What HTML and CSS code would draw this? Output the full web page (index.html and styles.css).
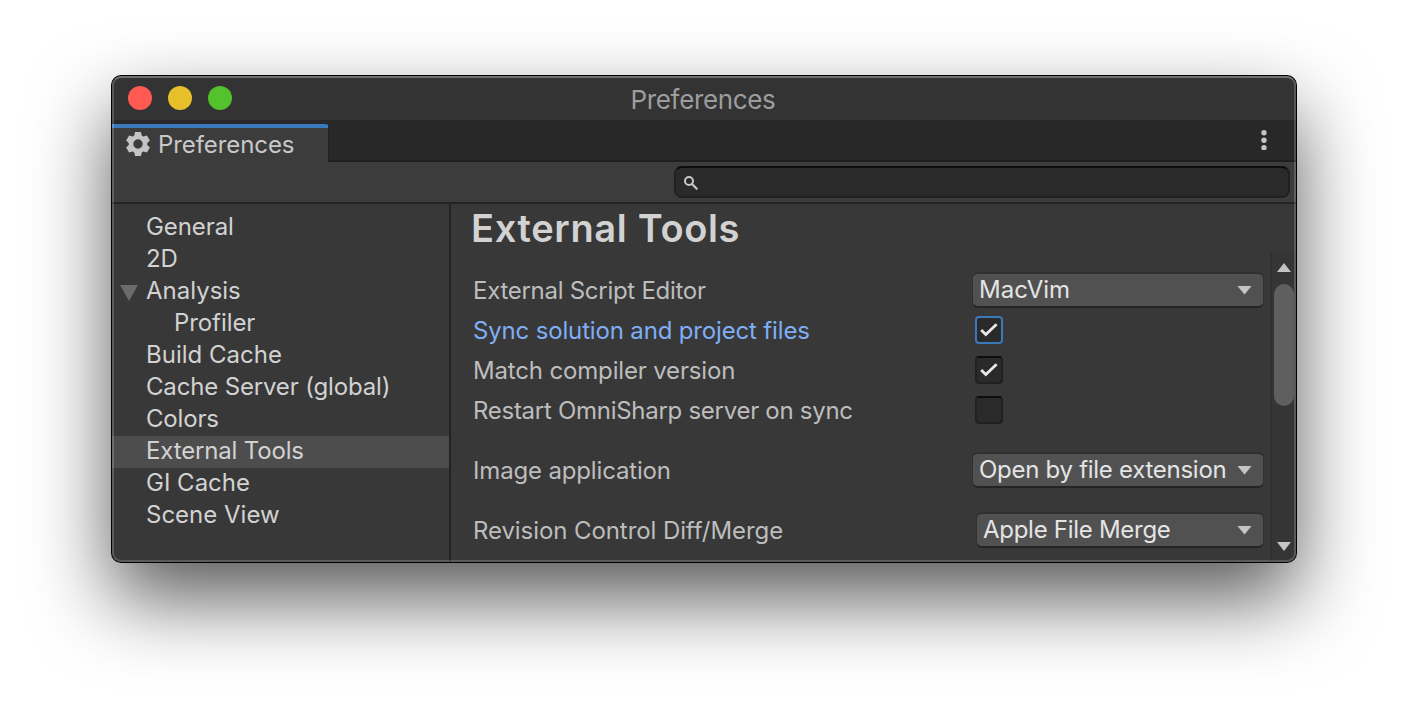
FILE: index.html
```html
<!DOCTYPE html>
<html lang="en">
<head>
<meta charset="utf-8">
<title>Preferences</title>
<link rel="stylesheet" href="styles.css">
</head>
<body>
<main class="window">
  <header class="titlebar">
    <div class="lights"><span class="light close"></span><span class="light minimize"></span><span class="light maximize"></span></div>
    <div class="title">Preferences</div>
  </header>
  <div class="tabstrip">
    <div class="tab">
      <svg class="gear" viewBox="-12 -12 24 24" width="24" height="24">
        <g fill="#c4c4c4">
          <path id="tooth" d="M-3-12H3L4-7H-4ZM-3 12H3L4 7H-4Z"/>
          <use href="#tooth" transform="rotate(60)"/>
          <use href="#tooth" transform="rotate(120)"/>
        </g>
        <circle r="7" fill="none" stroke="#c4c4c4" stroke-width="4.6"/>
      </svg>
      <span class="tab-name slight">Preferences</span>
    </div>
    <svg class="kebab" viewBox="0 0 6 20" width="6" height="20" fill="#c4c4c4"><circle cx="3" cy="2.7" r="2.7"/><circle cx="3" cy="10.2" r="2.7"/><circle cx="3" cy="17.7" r="2.7"/></svg>
  </div>
  <div class="toolbar">
    <div class="search">
      <svg viewBox="0 0 14 14" width="14" height="14" fill="none" stroke="#c8c8c8" stroke-width="2"><circle cx="5" cy="5" r="4"/><path d="M8 8L13.3 13.3" stroke-width="2.2"/></svg>
    </div>
  </div>
  <div class="body">
    <nav class="sidebar">
      <div class="item slight">General</div>
      <div class="item slight">2D</div>
      <div class="item"><svg class="foldout" viewBox="0 0 18 16" width="18" height="16"><path d="M0 0H18L9 16Z" fill="#6b6b6b"/></svg>Analysis</div>
      <div class="item child slight">Profiler</div>
      <div class="item">Build Cache</div>
      <div class="item snug">Cache Server (global)</div>
      <div class="item snug">Colors</div>
      <div class="item selected snug">External Tools</div>
      <div class="item">GI Cache</div>
      <div class="item">Scene View</div>
    </nav>
    <section class="content">
      <h1>External Tools</h1>
      <div class="pane">
        <div class="form">
          <div class="row"><span class="label tight">External Script Editor</span><div class="dropdown"><span>MacVim</span><i class="arrow"></i></div></div>
          <div class="row"><span class="label active snug">Sync solution and project files</span><div class="check focused"><svg viewBox="0 0 18 14" width="18" height="14"><path d="M1.2 7L5.8 11.6L16.6 1.2"/></svg></div></div>
          <div class="row"><span class="label snug">Match compiler version</span><div class="check"><svg viewBox="0 0 18 14" width="18" height="14"><path d="M1.2 7L5.8 11.6L16.6 1.2"/></svg></div></div>
          <div class="row"><span class="label tight">Restart OmniSharp server on sync</span><div class="check"></div></div>
          <div class="row spaced"><span class="label snug">Image application</span><div class="dropdown"><span class="tight">Open by file extension</span><i class="arrow"></i></div></div>
          <div class="row spaced"><span class="label slight">Revision Control Diff/Merge</span><div class="dropdown narrow"><span class="tight">Apple File Merge</span><i class="arrow"></i></div></div>
        </div>
        <div class="scrollbar"><i class="arrow up"></i><div class="track"><div class="thumb"></div></div><i class="arrow"></i></div>
      </div>
    </section>
  </div>
</main>
</body>
</html>
```
FILE: styles.css
```css
* { box-sizing: border-box; }
body {
  margin: 0;
  width: 1408px;
  height: 710px;
  padding: 76px 112px 0;
  overflow: hidden;
  background: #fff;
  font-family: Inter, "Liberation Sans", sans-serif;
  font-size: 24px;
  color: #d2d2d2;
}
.tight { letter-spacing: -.28px; }
.snug { letter-spacing: -.16px; }
.slight { letter-spacing: -.08px; }
.window {
  position: relative;
  display: flex;
  flex-direction: column;
  height: 486px;
  border-radius: 9px;
  background: #383838;
  box-shadow: 0 0 0 1px #000, 0 36px 80px rgba(0, 0, 0, .66);
}
.window::after {
  content: "";
  position: absolute;
  inset: 0;
  border-radius: 9px;
  border: 2px solid rgba(255, 255, 255, .18);
  border-top-color: rgba(255, 255, 255, .3);
  pointer-events: none;
}
.titlebar {
  display: grid;
  grid-template-columns: 1fr auto 1fr;
  align-items: center;
  height: 44px;
  padding-left: 16px;
  padding-right: 16px;
  background: #333;
  border-radius: 9px 9px 0 0;
}
.lights { display: flex; gap: 16px; }
.light { width: 24px; height: 24px; border-radius: 50%; }
.close { background: #ff5a52; }
.minimize { background: #e6c02a; }
.maximize { background: #54c22c; }
.title { font-size: 26px; color: #9d9d9d; letter-spacing: -.35px; padding: 2px 2px 0 0; }
.tabstrip {
  display: flex;
  justify-content: space-between;
  height: 42px;
  padding-top: 4px;
  background: linear-gradient(#282828 40px, #1f1f1f 40px);
}
.tab {
  display: flex;
  align-items: center;
  width: 217px;
  height: 38px;
  padding: 0 0 2px 14px;
  gap: 8px;
  border-top: 4px solid #3a79bb;
  border-right: 1px solid #1f1f1f;
  border-top-right-radius: 4px;
  background: #3c3c3c;
}
.tab-name { color: #c8c8c8; }
.kebab { margin: 6px 29px 0 0; }
.toolbar {
  display: flex;
  justify-content: flex-end;
  height: 42px;
  padding: 4px 6px 0 0;
  background: #3c3c3c;
  border-bottom: 2px solid #232323;
}
.search {
  display: flex;
  align-items: center;
  width: 616px;
  height: 32px;
  padding: 2px 0 0 8px;
  border: 2px solid #212121;
  border-top-color: #0d0d0d;
  border-radius: 8px;
  background: #2a2a2a;
}
.body { display: flex; flex: 1; min-height: 0; }
.sidebar {
  width: 339px;
  padding-top: 8px;
  border-right: 2px solid #232323;
}
.item {
  position: relative;
  height: 32px;
  padding-left: 34px;
  line-height: 29px;
}
.child { padding-left: 62px; }
.selected { background: #4d4d4d; }
.foldout { position: absolute; left: 8px; top: 9px; }
.content { display: flex; flex-direction: column; flex: 1; }
h1 {
  margin: 0;
  height: 48px;
  padding-left: 20px;
  font-size: 38px;
  font-weight: 600;
  line-height: 48px;
  letter-spacing: .65px;
}
.pane { display: flex; flex: 1; min-height: 0; }
.form { flex: 1; padding: 18px 6px 0 22px; }
.row { display: flex; align-items: center; height: 40px; }
.spaced { margin-top: 20px; }
.label { width: 499px; color: #bdbdbd; white-space: nowrap; }
.label.active { color: #7faef5; }
.dropdown {
  display: flex;
  align-items: center;
  justify-content: space-between;
  width: 292px;
  height: 36px;
  padding: 0 11px 2px 6px;
  border: solid #303030;
  border-width: 2px 1px;
  border-bottom-color: #242424;
  border-radius: 6px;
  background: #515151;
  color: #e4e4e4;
  white-space: nowrap;
}
.narrow { width: 288px; margin-left: 4px; }
.arrow {
  display: block;
  width: 14px;
  height: 9px;
  background: #c4c4c4;
  clip-path: polygon(0 0, 100% 0, 50% 100%);
}
.dropdown .arrow { width: 15px; margin-top: 2px; }
.arrow.up { clip-path: polygon(0 100%, 100% 100%, 50% 0); }
.check {
  display: flex;
  align-items: center;
  justify-content: center;
  width: 28px;
  height: 28px;
  margin-left: 3px;
  border: 2px solid #212121;
  border-top-color: #0d0d0d;
  border-radius: 4px;
  background: #2a2a2a;
}
.check.focused { border-color: #3a79bb; }
.check path { fill: none; stroke: #e8e8e8; stroke-width: 2.8; }
.scrollbar {
  display: flex;
  flex-direction: column;
  align-items: center;
  width: 26px;
  padding: 11px 0 11px;
  border-left: 2px solid #303030;
  border-radius: 0 0 9px 0;
  background: #353535;
}
.track { flex: 1; width: 20px; padding-top: 12px; }
.thumb { height: 122px; border-radius: 10px; background: #5f5f5f; }
```
